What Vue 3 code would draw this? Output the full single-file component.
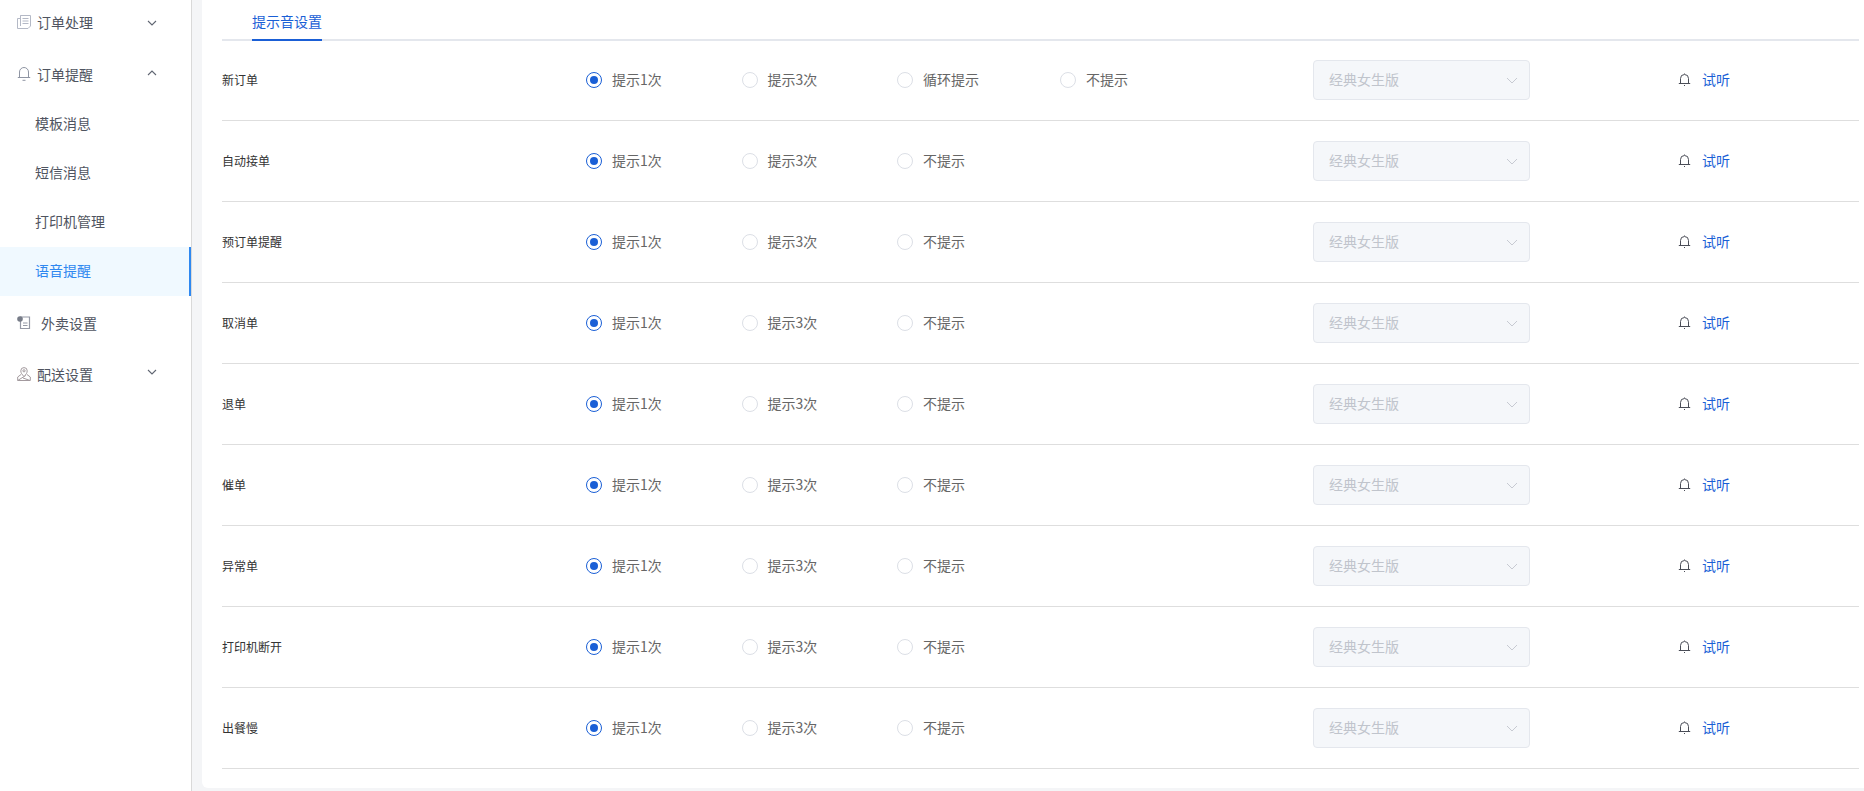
<script setup>
const subs = ['模板消息', '短信消息', '打印机管理']
const rows = [
  { name: '新订单', opts: ['提示1次', '提示3次', '循环提示', '不提示'] },
  { name: '自动接单' }, { name: '预订单提醒' }, { name: '取消单' }, { name: '退单' },
  { name: '催单' }, { name: '异常单' }, { name: '打印机断开' }, { name: '出餐慢' }
]
const defaults = ['提示1次', '提示3次', '不提示']
</script>

<template>
  <div class="page">
    <aside class="side">
      <div class="m m-first">
        <svg class="ic" viewBox="0 0 14 14" fill="none" stroke="#b4b9c6" stroke-width="1"><path d="M3.5 .5h10v10.500l-2.500 2.500H.5V3.500h3z" /><path d="M3.500 .5v10.500M5.500 3.500h6M5.500 6h6M5.500 8.500h6" /></svg>
        <span class="mt">订单处理</span>
        <svg class="ch" viewBox="0 0 10 6" fill="none" stroke="#606672" stroke-width="1.100"><path d="M1 1l4 4 4-4" /></svg>
      </div>
      <div class="m m-open">
        <svg class="ic" viewBox="0 0 14 14" fill="none" stroke="#8f95a3" stroke-width="1"><path d="M2.500 10.500V5a4.500 4.500 0 0 1 9 0v5.500M.8 10.500h12.400M5.500 13.300h3" /></svg>
        <span class="mt">订单提醒</span>
        <svg class="ch" viewBox="0 0 10 6" fill="none" stroke="#606672" stroke-width="1.100"><path d="M1 5l4-4 4 4" /></svg>
      </div>
      <div v-for="s in subs" :key="s" class="sub">{{ s }}</div>
      <div class="sub active">语音提醒</div>
      <div class="m m-take">
        <svg class="ic" viewBox="0 0 14 14" fill="none" stroke="#9599a5" stroke-width="1.200"><path d="M3.500 1h9v11.500h-9z" /><path d="M6 7h4.500M6 9.500h4.500" /><circle cx="3" cy="3" r="2.800" fill="#777c88" stroke="none" /></svg>
        <span class="mt">外卖设置</span>
      </div>
      <div class="m">
        <svg class="ic" viewBox="0 0 14 14" fill="none" stroke="#a39a9e" stroke-width="1"><path d="M4 7.500L.7 10v3.500h12.600V10L10 7.500" /><path d="M.7 13.500l8-5M6 11l7 2.500" /><path d="M7 9.500C5 7.500 3.800 6 3.800 3.800a3.200 3.200 0 0 1 6.400 0C10.200 6 9 7.500 7 9.500z" fill="#fff" /><circle cx="7" cy="3.800" r="1.100" /></svg>
        <span class="mt">配送设置</span>
        <svg class="ch" viewBox="0 0 10 6" fill="none" stroke="#606672" stroke-width="1.100"><path d="M1 1l4 4 4-4" /></svg>
      </div>
    </aside>
    <main class="main">
      <section class="card">
        <div class="tabs"><span class="tab">提示音设置</span></div>
        <div v-for="r in rows" :key="r.name" class="row">
          <div class="name">{{ r.name }}</div>
          <div class="opts">
            <label v-for="(o, i) in (r.opts || defaults)" :key="o" class="opt" :class="{ wl: o === '循环提示' }">
              <span class="radio" :class="{ on: i === 0 }"></span>
              <span>{{ o }}</span>
            </label>
          </div>
          <div class="select">
            <span>经典女生版</span>
            <svg class="sel-ch" viewBox="0 0 12 7" fill="none" stroke="#c7cad2" stroke-width="1"><path d="M1 1l5 5 5-5" /></svg>
          </div>
          <div class="listen">
            <svg class="bell" viewBox="0 0 13 13" fill="none" stroke="#4a4d57" stroke-width="1"><path d="M2.500 10V5.500a4 4 0 0 1 8 0V10M.8 10.500h11.400M6.500 1V.5M6 12.500h1" /></svg>
            <span class="link">试听</span>
          </div>
        </div>
      </section>
    </main>
  </div>
</template>

<style>
html, body { margin: 0; background: #f4f5f7; }
</style>

<style scoped>
.page { display: flex; height: 791px; overflow: hidden; font-family: "Noto Sans CJK SC", "Liberation Sans", sans-serif; }
.side { width: 191px; flex: none; background: #fff; border-right: 1px solid #d9d9d9; font-size: 14px; color: #4f5460; }
.m { display: flex; align-items: center; height: 49px; padding-left: 17px; position: relative; }
.m-first { height: 43px; margin-bottom: 7px; }
.m-open { height: 50px; padding-bottom: 2px; box-sizing: border-box; }
.ic { width: 14px; height: 14px; flex: none; margin-right: 6px; margin-top: 0; }
.m-take .ic { margin-right: 10px; }
.ch { position: absolute; left: 147px; top: 20px; width: 10px; height: 6px; }
.sub { height: 49px; line-height: 47px; padding-left: 35px; }
.active { background: #f0f9ff; color: #2f88f0; border-right: 2px solid #2f88f0; }
.m-take { height: 53px; }
.main { flex: 1; min-width: 0; padding: 0 0 3px 10px; }
.card { background: #fff; border-radius: 0 0 0 6px; padding: 0 5px 0 20px; box-sizing: border-box; height: 788px; }
.tabs { height: 41px; margin-bottom: -1px; border-bottom: 2px solid #e4e7ed; box-sizing: border-box; padding-left: 30px; display: flex; }
.tab { height: 41px; line-height: 42px; color: #1a5fd6; font-size: 14px; border-bottom: 2px solid #1a5fd6; box-sizing: border-box; }
.row { display: flex; align-items: center; height: 81px; border-bottom: 1px solid #dedede; box-sizing: border-box; }
.name { width: 366px; flex: none; font-size: 12px; color: #333; margin-top: -1px; }
.opts { display: flex; width: 725px; flex: none; font-size: 14px; color: #666; margin-top: -2px; }
.opt { width: 155.5px; display: flex; align-items: center; gap: 10px; flex: none; }
.wl { width: 163px; }
.radio { width: 16px; height: 16px; border: 1px solid #dcdfe6; border-radius: 50%; box-sizing: border-box; display: inline-block; position: relative; margin: 2px 0 0 -2px; }
.radio.on { border-color: #1a5fd6; }
.radio.on::after { content: ""; position: absolute; inset: 3px; border-radius: 50%; background: #1a5fd6; }
.select { width: 217px; height: 40px; flex: none; box-sizing: border-box; border: 1px solid #e4e7ed; border-radius: 4px; background: #f5f7fa; color: #c0c4cc; font-size: 14px; display: flex; align-items: center; justify-content: space-between; padding: 0 11px 2px 15px; }
.sel-ch { width: 12px; height: 7px; margin-top: 2px; }
.listen { margin-left: 148px; display: flex; align-items: center; gap: 11px; font-size: 14px; margin-top: -3px; }
.bell { width: 13px; height: 13px; margin-top: 2px; }
.link { color: #1a5fd6; }
</style>
